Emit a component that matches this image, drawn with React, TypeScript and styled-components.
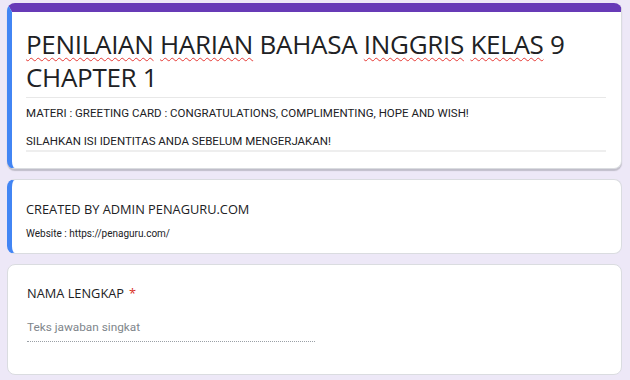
import React from "react"
import styled, { createGlobalStyle } from "styled-components"

const Global = createGlobalStyle`
  html, body { margin: 0; padding: 0; background: #ede8f7; }
  body { font-family: Roboto, "Liberation Sans", sans-serif; }
`

const Page = styled.div`
  width: 630px;
  height: 380px;
  box-sizing: border-box;
  padding: 3px 8px 0 7px;
  display: flex;
  flex-direction: column;
  gap: 10px;
  overflow: hidden;
`

const Card = styled.div<{ $accent?: boolean; $top?: boolean }>`
  position: relative;
  background: #fff;
  border: 1px solid #dadce0;
  border-radius: 8px;
  overflow: hidden;
  box-sizing: border-box;
  ${(p) => p.$top && `
    border-top: 9px solid #673ab7;
    box-shadow: 0 2px 1px rgba(60, 64, 67, 0.25);
  `}
  ${(p) => p.$accent && `
    border-left: 5px solid #4285f4;
  `}
`

const Body = styled.div<{ $pad: string }>`
  padding: ${(p) => p.$pad};
  display: flex;
  flex-direction: column;
`

const Title = styled.h1`
  margin: 0;
  font-family: "Open Sans", sans-serif;
  font-weight: 400;
  font-size: 26px;
  line-height: 33px;
  color: #202124;
  letter-spacing: -0.3px;
`

const Typo = styled.span`
  text-decoration: underline wavy #e53935;
  text-decoration-thickness: 1px;
  text-underline-offset: 3px;
`

const Rule = styled.div<{ $color?: string }>`
  height: 1px;
  background: ${(p) => p.$color || "#e8e8e8"};
`

const Desc = styled.p`
  margin: 0;
  font-size: 11.5px;
  line-height: 14px;
  color: #202124;
`

const Heading = styled.h2`
  margin: 0;
  font-family: "Open Sans", sans-serif;
  font-weight: 400;
  font-size: 12.8px;
  line-height: 18px;
  color: #202124;
`

const Small = styled.p`
  margin: 0;
  font-size: 10px;
  line-height: 13px;
  color: #202124;
`

const Star = styled.span`
  color: #d93025;
  margin-left: 5px;
`

const Answer = styled.div`
  width: 288px;
  padding-bottom: 6px;
  border-bottom: 1px dotted #9aa0a6;
  font-size: 11.8px;
  line-height: 15px;
  color: #80868b;
`

export default function App() {
  return (
    <Page>
      <Global />
      <Card $top $accent>
        <Body $pad="16px 15px 0 14px">
          <Title>
            <Typo>PENILAIAN</Typo> <Typo>HARIAN</Typo> BAHASA <Typo>INGGRIS</Typo> <Typo>KELAS</Typo> 9 CHAPTER 1
          </Title>
          <Rule style={{ marginTop: 3 }} />
          <Desc style={{ marginTop: 8 }}>MATERI : GREETING CARD : CONGRATULATIONS, COMPLIMENTING, HOPE AND WISH!</Desc>
          <Desc style={{ marginTop: 14 }}>SILAHKAN ISI IDENTITAS ANDA SEBELUM MENGERJAKAN!</Desc>
          <Rule style={{ marginTop: 2, height: 2 }} $color="#eeeeee" />
          <div style={{ height: 16 }} />
        </Body>
      </Card>
      <Card $accent>
        <Body $pad="20px 15px 13px 14px">
          <Heading>CREATED BY ADMIN PENAGURU.COM</Heading>
          <Small style={{ marginTop: 9 }}>Website : https://penaguru.com/</Small>
        </Body>
      </Card>
      <Card style={{ height: 111 }}>
        <Body $pad="19px 15px 0 19px">
          <Heading>
            NAMA LENGKAP<Star>*</Star>
          </Heading>
          <div style={{ height: 18 }} />
          <Answer>Teks jawaban singkat</Answer>
        </Body>
      </Card>
    </Page>
  )
}
